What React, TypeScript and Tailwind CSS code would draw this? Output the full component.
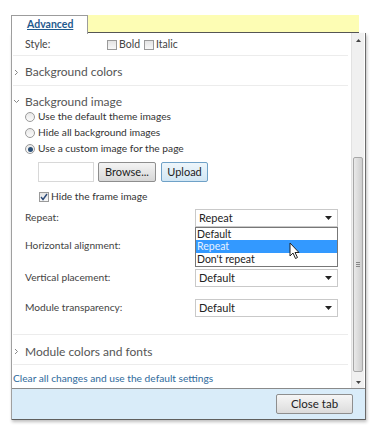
import React from 'react'

const font = { fontFamily: 'Lato, "Open Sans", sans-serif' }

const Chevron = ({ open }: { open?: boolean }) => (
  <svg width="7" height="7" viewBox="0 0 7 7" className="mr-[5px] shrink-0">
    {open ? (
      <path d="M1 2 L3.5 4.5 L6 2" fill="none" stroke="#888" strokeWidth="1" />
    ) : (
      <path d="M2 1 L4.5 3.5 L2 6" fill="none" stroke="#888" strokeWidth="1" />
    )}
  </svg>
)

const Radio = ({ checked }: { checked?: boolean }) => (
  <span className="w-[10px] h-[10px] rounded-full border border-[#9a9a9a] bg-gradient-to-b from-[#e8e8e8] to-[#fbfbfb] flex items-center justify-center mr-[3px] shrink-0">
    {checked && <span className="w-[5px] h-[5px] rounded-full bg-[#2b4f76]" />}
  </span>
)

const Check = ({ checked }: { checked?: boolean }) => (
  <span className="w-[10px] h-[10px] border border-[#9a9a9a] bg-gradient-to-b from-[#e4e4e4] to-[#f8f8f8] flex items-center justify-center mr-[2px] shrink-0">
    {checked && (
      <svg width="8" height="8" viewBox="0 0 8 8">
        <path d="M1 4 L3 6.5 L7 1" fill="none" stroke="#2c4a78" strokeWidth="1.4" />
      </svg>
    )}
  </span>
)

const Select = ({ value }: { value: string }) => (
  <div className="w-[143px] h-[18px] border border-[#c9c9c9] bg-white flex items-center justify-between pl-[3px] pr-[5px] text-[11px] text-[#222]">
    <span>{value}</span>
    <svg width="7" height="4" viewBox="0 0 7 4">
      <path d="M0 0 H7 L3.5 4 Z" fill="#222" />
    </svg>
  </div>
)

const Divider = () => <div className="h-px bg-[#ececec] mr-[3px]" />

export default function App() {
  return (
    <div className="w-[386px] h-[434px] bg-white relative" style={font}>
      <div className="pt-[15px] pl-[11px] w-[359px]">
        {/* tab strip */}
        <div className="flex h-[18px]">
          <div className="w-[77px] h-[19px] border-l border-t border-r border-[#9c9c9c] bg-white relative z-10 pl-[15px] pt-[1px] text-[10.5px] font-bold text-[#1f5a8e] underline leading-[15px]">
            Advanced
          </div>
          <div className="flex-1 bg-[#fdfdb4] border-b border-[#555]" />
        </div>

        {/* panel */}
        <div className="w-[355px] border-l border-r border-l-[#a0a0a0] border-r-[#6b6b6b] shadow-[1px_2px_3px_rgba(0,0,0,0.25)]">
          <div className="flex h-[355px]">
            <div className="flex-1 relative pl-[1px] text-[#444]">
              {/* style row */}
              <div className="h-[22px] flex items-center text-[10.5px] pl-[12px] pt-[1px]">
                <span className="w-[82px]">Style:</span>
                <Check />
                <span className="mr-[4px]">Bold</span>
                <Check />
                <span>Italic</span>
              </div>
              <Divider />
              <div className="h-[29px] flex items-center pt-[3px] text-[12px] text-[#555]">
                <Chevron />
                Background colors
              </div>
              <Divider />
              <div className="h-[23px] flex items-center pt-[8px] text-[12px] text-[#555]">
                <Chevron open />
                Background image
              </div>
              <div className="pl-[12px] text-[10.2px] text-[#333]">
                <div className="h-[16px] flex items-center"><Radio />Use the default theme images</div>
                <div className="h-[16px] flex items-center"><Radio />Hide all background images</div>
                <div className="h-[16px] flex items-center"><Radio checked />Use a custom image for the page</div>
                <div className="flex items-center gap-[3px] mt-[5px] ml-[13px] h-[20px]">
                  <div className="w-[56px] h-[20px] border border-[#d8d8d8] bg-white" />
                  <button className="w-[58px] h-[20px] border border-[#8e8e8e] rounded-[2px] bg-gradient-to-b from-[#f4f4f4] to-[#d7d7d7] text-[11px] text-[#222] ml-[1px]">
                    Browse...
                  </button>
                  <button className="w-[47px] h-[20px] border border-[#6fa1c7] rounded-[2px] bg-gradient-to-b from-[#eef6fb] to-[#d1e6f4] text-[11px] text-[#222] ml-[2px]">
                    Upload
                  </button>
                </div>
                <div className="h-[16px] flex items-center ml-[14px] mt-[7px]"><Check checked />Hide the frame image</div>
              </div>

              <div className="pl-[12px] text-[10.2px] text-[#444] mt-[4px]">
                <div className="h-[18px] flex items-center justify-between pr-[13px]">
                  <span>Repeat:</span>
                  <Select value="Repeat" />
                </div>
                <div className="h-[18px] flex items-center justify-between pr-[13px] mt-[10px]">
                  <span>Horizontal alignment:</span>
                  <Select value="" />
                </div>
                <div className="h-[18px] flex items-center justify-between pr-[13px] mt-[14px]">
                  <span>Vertical placement:</span>
                  <Select value="Default" />
                </div>
                <div className="h-[18px] flex items-center justify-between pr-[13px] mt-[12px]">
                  <span>Module transparency:</span>
                  <Select value="Default" />
                </div>
              </div>

              {/* open dropdown list */}
              <div className="absolute left-[183px] top-[194px] w-[143px] h-[40px] border border-[#777] bg-white text-[10.5px] text-[#222] leading-[13px]">
                <div className="pl-[1px] h-[12px] leading-[12px]">Default</div>
                <div className="pl-[1px] h-[13px] bg-[#3399ff] text-[#e8f2ff]">Repeat</div>
                <div className="pl-[1px] h-[13px]">Don't repeat</div>
              </div>
              <svg className="absolute left-[277px] top-[209px]" width="12" height="18" viewBox="0 0 12 18">
                <path d="M1 1 L1 14 L4 11 L6.5 16.5 L8.5 15.5 L6 10.5 L10 10.5 Z" fill="#fff" stroke="#222" strokeWidth="1" strokeLinejoin="round" />
              </svg>

              <div className="mt-[17px]"><Divider /></div>
              <div className="h-[29px] flex items-center pt-[4px] text-[12px] text-[#555]">
                <Chevron />
                Module colors and fonts
              </div>
              <Divider />
              <div className="h-[23px] flex items-center pt-[5px] text-[10.2px] text-[#2f6a9c]">
                Clear all changes and use the default settings
              </div>
            </div>

            {/* scrollbar */}
            <div className="w-[13px] bg-[#f0f0f0] border-l border-[#e2e2e2] flex flex-col items-center mr-[1px]">
              <div className="h-[14px] flex items-center justify-center">
                <svg width="5" height="3" viewBox="0 0 5 3"><path d="M0 3 L2.5 0 L5 3 Z" fill="#444" /></svg>
              </div>
              <div className="h-[110px]" />
              <div className="w-[10px] h-[215px] border border-[#a7a7a7] rounded-[2px] bg-gradient-to-r from-[#e9e9e9] via-[#dcdcdc] to-[#cdcdcd] flex items-center justify-center">
                <div className="flex flex-col gap-[1px]">
                  <div className="w-[4px] h-px bg-[#888]" />
                  <div className="w-[4px] h-px bg-[#888]" />
                  <div className="w-[4px] h-px bg-[#888]" />
                </div>
              </div>
              <div className="flex-1 flex items-end justify-center pb-[4px]">
                <svg width="5" height="3" viewBox="0 0 5 3"><path d="M0 0 L2.5 3 L5 0 Z" fill="#444" /></svg>
              </div>
            </div>
          </div>

          {/* footer */}
          <div className="h-[32px] bg-[#d9ecf9] border-t border-t-[#8a8a8a] border-b border-b-[#5f5f5f] flex items-center justify-end pr-[12px]">
            <button className="w-[77px] h-[20px] border border-[#8e8e8e] rounded-[2px] bg-gradient-to-b from-[#f6f6f6] to-[#dcdcdc] text-[11.5px] text-[#222]">
              Close tab
            </button>
          </div>
        </div>
      </div>
    </div>
  )
}
